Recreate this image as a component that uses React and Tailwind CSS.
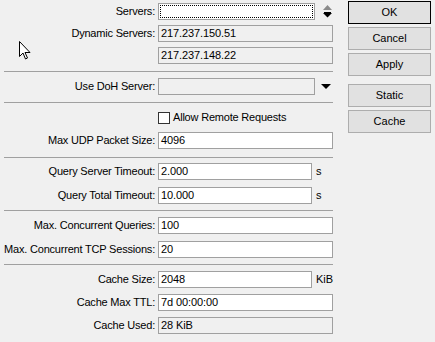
import React from "react";

const font = { fontFamily: '"Liberation Sans", Arial, sans-serif' };

function Label({ children }) {
  return (
    <div className="w-[151px] shrink-0 text-right whitespace-nowrap text-[11px] leading-[17px] tracking-[-0.2px] text-black">
      {children}
    </div>
  );
}

function Field({ value, w = 175, ro = false, focus = false }) {
  return (
    <div
      className={`ml-[3px] h-[17px] border border-[#a0a0a0] ${ro ? "bg-[#f0f0f0]" : "bg-white"} relative text-[11px] leading-[15px] tracking-[-0.1px] text-black pl-[2px] whitespace-nowrap overflow-hidden`}
      style={{ width: w }}
    >
      {focus && <div className="absolute inset-[1px] border border-dotted border-black" />}
      {value}
    </div>
  );
}

function Row({ label, mt, children }) {
  return (
    <div className="flex items-center h-[17px]" style={{ marginTop: mt }}>
      <Label>{label}</Label>
      {children}
    </div>
  );
}

function Sep({ mt }) {
  return <div className="h-px w-[329px] bg-[#a0a0a0]" style={{ marginTop: mt }} />;
}

function Btn({ children, def = false, mt = 3 }) {
  return (
    <div
      className={`h-[23px] w-[83px] flex items-center justify-center text-[11px] text-black bg-[#e1e1e1] border ${def ? "border-black" : "border-[#adadad]"}`}
      style={{ marginTop: mt }}
    >
      {children}
    </div>
  );
}

export default function App() {
  return (
    <div className="w-[435px] h-[342px] bg-[#f0f0f0] flex relative overflow-hidden" style={font}>
      <div className="w-[348px] shrink-0 pl-[4px] flex flex-col">
        <Row label="Servers:" mt={3}>
          <Field w={157} focus />
          <svg className="ml-[8px]" width="9" height="13" viewBox="0 0 9 13">
            <polygon points="4.5,0 0,5 9,5" fill="#8a8a8a" />
            <rect x="1" y="7" width="7" height="1" fill="#000" />
            <polygon points="0,8 9,8 4.5,12.5" fill="#000" />
          </svg>
        </Row>
        <Row label="Dynamic Servers:" mt={5}>
          <Field value="217.237.150.51" ro />
        </Row>
        <Row label="" mt={5}>
          <Field value="217.237.148.22" ro />
        </Row>
        <Sep mt={7} />
        <Row label="Use DoH Server:" mt={6}>
          <Field w={157} ro />
          <svg className="ml-[6px]" width="10" height="5" viewBox="0 0 10 5">
            <polygon points="0,0 10,0 5,5" fill="#000" />
          </svg>
        </Row>
        <Sep mt={7} />
        <Row label="" mt={6}>
          <div className="ml-[3px] w-[12px] h-[12px] border border-[#333] bg-white" />
          <span className="ml-[3px] text-[11px] tracking-[-0.2px] text-black">Allow Remote Requests</span>
        </Row>
        <Row label="Max UDP Packet Size:" mt={6}>
          <Field value="4096" />
        </Row>
        <Sep mt={8} />
        <Row label="Query Server Timeout:" mt={5}>
          <Field value="2.000" w={154} />
          <span className="ml-[4px] text-[11px]">s</span>
        </Row>
        <Row label="Query Total Timeout:" mt={7}>
          <Field value="10.000" w={154} />
          <span className="ml-[4px] text-[11px]">s</span>
        </Row>
        <Sep mt={6} />
        <Row label="Max. Concurrent Queries:" mt={6}>
          <Field value="100" />
        </Row>
        <Row label="Max. Concurrent TCP Sessions:" mt={7}>
          <Field value="20" />
        </Row>
        <Sep mt={6} />
        <Row label="Cache Size:" mt={6}>
          <Field value="2048" w={154} />
          <span className="ml-[4px] text-[11px]">KiB</span>
        </Row>
        <Row label="Cache Max TTL:" mt={6}>
          <Field value="7d 00:00:00" />
        </Row>
        <Row label="Cache Used:" mt={6}>
          <Field value="28 KiB" ro />
        </Row>
      </div>
      <div className="flex flex-col pt-[1px]">
        <Btn def mt={0}>OK</Btn>
        <Btn>Cancel</Btn>
        <Btn>Apply</Btn>
        <Btn mt={8}>Static</Btn>
        <Btn>Cache</Btn>
      </div>
      <svg className="absolute left-[19px] top-[41px]" width="13" height="20" viewBox="0 0 13 20">
        <path d="M0.5,0.5 L0.5,15.5 L4,12 L6.5,18 L8.5,17 L6,11.5 L11,11.5 Z" fill="#fff" stroke="#000" strokeWidth="1" />
      </svg>
    </div>
  );
}
